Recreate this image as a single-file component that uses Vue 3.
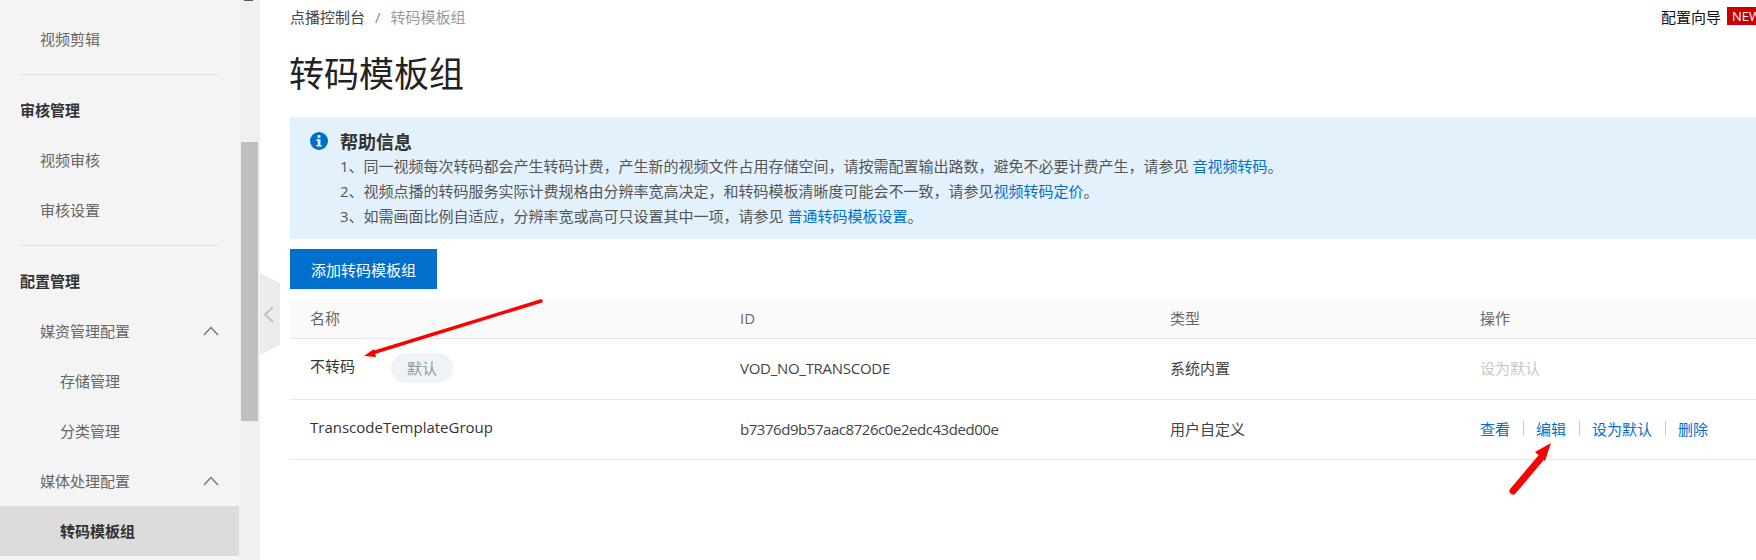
<script setup>
const lines = [
  { text: '1、同一视频每次转码都会产生转码计费，产生新的视频文件占用存储空间，请按需配置输出路数，避免不必要计费产生，请参见 ', link: '音视频转码', end: '。' },
  { text: '2、视频点播的转码服务实际计费规格由分辨率宽高决定，和转码模板清晰度可能会不一致，请参见', link: '视频转码定价', end: '。' },
  { text: '3、如需画面比例自适应，分辨率宽或高可只设置其中一项，请参见 ', link: '普通转码模板设置', end: '。' },
]
const actions = ['查看', '编辑', '设为默认', '删除']
</script>

<template>
  <div class="page">
    <aside class="sidebar">
      <div class="item l1 first">视频剪辑</div>
      <div class="divider"></div>
      <div class="item group">审核管理</div>
      <div class="item l1">视频审核</div>
      <div class="item l1">审核设置</div>
      <div class="divider"></div>
      <div class="item group">配置管理</div>
      <div class="item l1">媒资管理配置
        <svg class="chev" width="16" height="10" viewBox="0 0 16 10"><path d="M1 9 L8 1.5 L15 9" fill="none" stroke="#6f7880" stroke-width="1.4"/></svg>
      </div>
      <div class="item l2">存储管理</div>
      <div class="item l2">分类管理</div>
      <div class="item l1">媒体处理配置
        <svg class="chev" width="16" height="10" viewBox="0 0 16 10"><path d="M1 9 L8 1.5 L15 9" fill="none" stroke="#6f7880" stroke-width="1.4"/></svg>
      </div>
      <div class="item l2 active">转码模板组</div>
    </aside>

    <div class="track">
      <div class="track-cap"></div>
      <div class="thumb"></div>
    </div>

    <main class="main">
      <svg class="handle" width="21" height="84" viewBox="0 0 21 84">
        <polygon points="0,1 20,11 20,73 0,83" fill="#ececec"/>
        <path d="M13 35 L5 42.5 L13 50" fill="none" stroke="#c4c4c4" stroke-width="2"/>
      </svg>

      <header class="topbar">
        <nav class="crumbs">
          <span class="crumb-root">点播控制台</span>
          <span class="crumb-sep">/</span>
          <span class="crumb-cur">转码模板组</span>
        </nav>
        <div class="guide">配置向导<span class="new">NEW</span></div>
      </header>

      <h1 class="title">转码模板组</h1>

      <section class="help">
        <svg class="info" width="18" height="18" viewBox="0 0 18 18">
          <circle cx="9" cy="9" r="9" fill="#0070cc"/>
          <rect x="7.6" y="3.2" width="2.8" height="2.6" fill="#fff"/>
          <path d="M6.6 7.3 H10.4 V12.9 H11.6 V14.6 H6.6 V12.9 H7.8 V9 H6.6 Z" fill="#fff"/>
        </svg>
        <div class="help-body">
          <div class="help-title">帮助信息</div>
          <div v-for="l in lines" :key="l.link" class="help-line">{{ l.text }}<a class="link">{{ l.link }}</a>{{ l.end }}</div>
        </div>
      </section>

      <button class="add">添加转码模板组</button>

      <div class="table">
        <div class="row head">
          <div>名称</div><div>ID</div><div>类型</div><div class="op-head">操作</div>
        </div>
        <div class="row row-first">
          <div class="name">不转码<span class="tag">默认</span></div>
          <div class="vod">VOD_NO_TRANSCODE</div>
          <div>系统内置</div>
          <div class="disabled">设为默认</div>
        </div>
        <div class="row">
          <div class="name raise">TranscodeTemplateGroup</div>
          <div class="hash">b7376d9b57aac8726c0e2edc43ded00e</div>
          <div>用户自定义</div>
          <div class="ops">
            <template v-for="(a, i) in actions" :key="a">
              <span v-if="i" class="op-sep"></span>
              <a class="link">{{ a }}</a>
            </template>
          </div>
        </div>
      </div>
    </main>

    <svg class="arrows" width="1756" height="560" viewBox="0 0 1756 560">
      <path d="M541 301 L372 353" stroke="#fe0000" stroke-width="3.5" stroke-linecap="round" fill="none"/>
      <polygon points="364,356 374,349 376,357" fill="#fe0000"/>
      <path d="M1513 491 L1540 459" stroke="#fe0000" stroke-width="7" stroke-linecap="round" fill="none"/>
      <polygon points="1551,443 1545,461 1535,452" fill="#fe0000"/>
    </svg>
  </div>
</template>

<style scoped>
.page {
  position: relative;
  display: flex;
  width: 1756px;
  height: 560px;
  overflow: hidden;
  background: #fff;
  color: #444;
  font-family: "Open Sans", "Noto Sans CJK SC", sans-serif;
  font-size: 15px;
}
.sidebar {
  width: 239px;
  flex: none;
  background: #f4f4f4;
  padding-top: 14px;
  box-sizing: border-box;
}
.item {
  position: relative;
  height: 50px;
  line-height: 50px;
  color: #666;
}
.l1 { padding-left: 40px; }
.l2 { padding-left: 60px; }
.group { padding-left: 20px; color: #333; font-weight: 700; }
.active { background: #dcdcdc; color: #333; font-weight: 700; }
.divider {
  height: 1px;
  margin: 10px 20px;
  background: #e0e0e0;
}
.chev { position: absolute; right: 20px; top: 20px; }
.track {
  width: 21px;
  flex: none;
  background: #f0f0f0;
  padding: 0 1px 0 2px;
  box-sizing: border-box;
}
.track-cap {
  width: 9px;
  height: 1px;
  margin: 0 0 141px 3px;
  background: #555;
}
.thumb { height: 279px; background: #bfbfbf; width: 17px; }
.main {
  position: relative;
  flex: 1;
  min-width: 0;
  padding-left: 30px;
}
.handle { position: absolute; left: 0; top: 272px; }
.topbar {
  display: flex;
  justify-content: space-between;
  height: 34px;
  line-height: 34px;
}
.crumb-sep { margin: 0 10px; color: #888; }
.crumb-cur { color: #999; }
.guide { color: #111; margin-right: -10px; display: flex; align-items: flex-start; line-height: 34px; }
.new {
  background: #c80000;
  color: #fff;
  font-size: 13px;
  line-height: 18px;
  height: 18px;
  padding: 0 5px;
  margin: 7px 0 0 6px;
}
.title {
  margin: 0 0 0 -1px;
  height: 83px;
  line-height: 80px;
  font-size: 35px;
  font-weight: 400;
  color: #222;
}
.help {
  display: flex;
  height: 122px;
  box-sizing: border-box;
  padding: 15px 0 0 20px;
  background: #e3f1fd;
}
.info { flex: none; margin: 0 12px 0 0; }
.help-title { font-size: 18px; font-weight: 700; line-height: 18px; margin: 1px 0 3px; color: #333; }
.help-line { line-height: 25px; color: #555; }
.link { color: #0070cc; }
.add {
  display: block;
  margin: 10px 0;
  width: 147px;
  height: 40px;
  border: 0;
  padding: 0;
  background: #0070cc;
  color: #fff;
  font: inherit;
}
.row {
  display: grid;
  grid-template-columns: 430px 430px 310px 1fr;
  height: 60px;
  padding-bottom: 2px;
  align-items: center;
  border-bottom: 1px solid #e8e8e8;
  box-sizing: border-box;
}
.row-first { height: 61px; padding-bottom: 3px; }
.row > div { padding-left: 20px; }
.head { height: 40px; background: #fafafa; color: #666; }
.name { color: #333; }
.raise { position: relative; top: -2px; }
.vod { letter-spacing: -0.28px; }
.hash { letter-spacing: -0.45px; }
.tag {
  display: inline-block;
  width: 62px;
  height: 30px;
  line-height: 30px;
  margin-left: 36px;
  border-radius: 15px;
  background: #eff3f8;
  color: #8a99a8;
  text-align: center;
  vertical-align: middle;
}
.disabled { color: #c8c8c8; }
.ops { display: flex; align-items: center; }
.op-sep { width: 1px; height: 15px; margin: 0 12.5px; background: #c8c8c8; }
.arrows { position: absolute; left: 0; top: 0; pointer-events: none; }
</style>

<style>
html, body { margin: 0; background: #fff; }
</style>
